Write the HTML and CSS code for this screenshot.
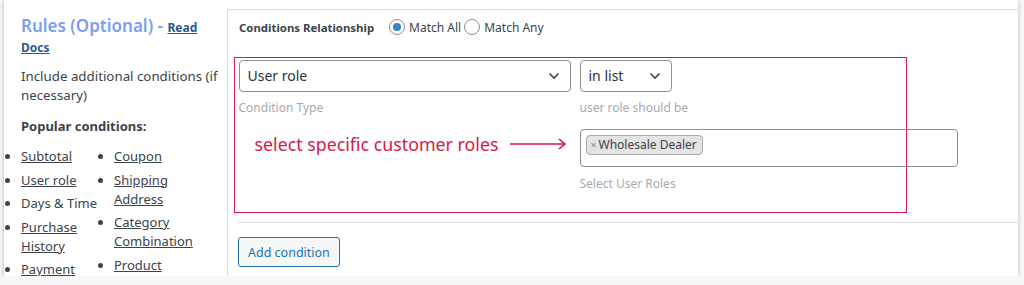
FILE: index.html
```html
<!DOCTYPE html>
<html>
<head>
<meta charset="utf-8">
<link rel="stylesheet" href="styles.css">
</head>
<body>
<div class="card">
  <aside class="side">
    <h2 class="title">Rules (Optional) - <a class="docs" href="#">Read Docs</a></h2>
    <p class="desc">Include additional conditions (if necessary)</p>
    <p class="pop">Popular conditions:</p>
    <div class="lists">
      <ul>
        <li><a href="#">Subtotal</a></li>
        <li><a href="#">User role</a></li>
        <li>Days &amp; Time</li>
        <li><a href="#">Purchase History</a></li>
        <li><a href="#">Payment Method</a></li>
      </ul>
      <ul>
        <li><a href="#">Coupon</a></li>
        <li><a href="#">Shipping Address</a></li>
        <li><a href="#">Category Combination</a></li>
        <li><a href="#">Product</a></li>
      </ul>
    </div>
  </aside>
  <section class="main">
    <div class="rel">
      <span class="rel-label">Conditions Relationship</span>
      <label class="radio"><span class="dot on"></span>Match All</label>
      <label class="radio"><span class="dot"></span>Match Any</label>
    </div>
    <div class="box">
      <div class="grid">
        <div class="select wide">User role<svg class="chev" viewBox="0 0 12 8"><path d="M1.5 1.5 6 6l4.5-4.5" fill="none" stroke="#3c434a" stroke-width="1.6"/></svg></div>
        <div class="select narrow">in list<svg class="chev" viewBox="0 0 12 8"><path d="M1.5 1.5 6 6l4.5-4.5" fill="none" stroke="#3c434a" stroke-width="1.6"/></svg></div>
        <div class="hint">Condition Type</div>
        <div class="hint">user role should be</div>
        <div class="note">
          <span>select specific customer roles</span>
          <svg class="arrow" viewBox="0 0 58 12"><path d="M0 6h55M49 1l6 5-6 5" fill="none" stroke="#d31a48" stroke-width="1.6"/></svg>
        </div>
        <div class="multi"><span class="tag"><span class="x">×</span>Wholesale Dealer</span></div>
        <div></div>
        <div class="hint last">Select User Roles</div>
      </div>
    </div>
    <div class="sep"></div>
    <button class="btn">Add condition</button>
  </section>
</div>
</body>
</html>
```
FILE: styles.css
```css
* { box-sizing: border-box; }
html, body { margin: 0; padding: 0; background: #f7f7f7; }
body { font-family: "Noto Sans", "Open Sans", sans-serif; color: #3c434a; font-size: 13px; }
.card {
  margin-left: 4px;
  width: 1014px;
  height: 276px;
  background: #fff;
  display: flex;
  overflow: hidden;
  box-shadow: 0 1px 4px rgba(0,0,0,.28);
}
.side { width: 223px; flex: none; padding: 16px 8px 0 17px; }
.title { margin: 0; font-size: 17px; font-weight: 600; color: #7b9ef0; line-height: 20px; }
.docs { font-size: 12px; font-weight: 700; color: #2a5a8c; line-height: 1; }
.desc { margin: 11px 0 0; line-height: 19px; font-size: 13.3px; }
.pop { margin: 12px 0 0; font-weight: 700; line-height: 18px; }
.lists { display: flex; margin-left: -14px; margin-top: 12px; }
.lists ul { margin: 0; padding: 0 0 0 14px; width: 94px; list-style: disc; }
.lists ul + ul { width: 110px; padding-left: 13px; }
.lists li { line-height: 19px; margin-bottom: 4.5px; }
.lists a { color: #3c434a; }
.main { flex: 1; margin-top: 9px; border-left: 1px solid #dcdcde; border-top: 1px solid #dcdcde; }
.rel { display: flex; align-items: center; padding: 8px 0 0 11px; height: 26px; }
.rel-label { font-size: 11.4px; font-weight: 700; margin-right: 15px; }
.radio { display: flex; align-items: center; margin-right: 3px; font-size: 12px; }
.dot { width: 16px; height: 16px; border: 1px solid #8c8f94; border-radius: 50%; margin-right: 4px; position: relative; }
.dot.on::after { content: ""; position: absolute; left: 3px; top: 3px; width: 8px; height: 8px; border-radius: 50%; background: #3582c4; }
.box { margin: 21px 0 0 6px; width: 673px; height: 156px; border: 1.5px solid #d31a48; padding: 1.5px 0 0 3.5px; }
.grid { display: grid; grid-template-columns: 332px auto; column-gap: 9px; align-items: start; }
.select { height: 32px; border: 1px solid #8c8f94; border-radius: 4px; display: flex; align-items: center; justify-content: space-between; padding: 0 10px 0 8px; font-size: 14px; color: #2c3338; }
.narrow { width: 92px; }
.chev { width: 12px; height: 8px; }
.hint { color: #a7aaad; font-size: 12px; margin-top: 8px; line-height: 16px; height: 29px; }
.hint.last { margin-top: 9px; }
.note { display: flex; align-items: center; height: 38px; padding: 0 0 8px 16px; color: #d31a48; font-size: 17.8px; }
.arrow { width: 58px; height: 12px; margin-left: 12px; }
.multi { width: 378px; height: 38px; border: 1px solid #8c8f94; border-radius: 4px; padding: 5px 0 0 5px; }
.tag { display: inline-flex; align-items: center; height: 20px; background: #e4e4e4; border: 1px solid #aaa; border-radius: 4px; padding: 0 5px 0 4px; font-size: 12px; color: #3c434a; }
.x { color: #888; font-size: 10.5px; margin-right: 2px; }
.sep { margin: 9px 0 0 10px; border-top: 1px solid #dcdcde; }
.btn { margin: 14px 0 0 10px; height: 30px; padding: 0 9px; border: 1px solid #2271b1; border-radius: 3px; background: #f6f7f7; color: #2271b1; font-family: inherit; font-size: 12.5px; }
```
